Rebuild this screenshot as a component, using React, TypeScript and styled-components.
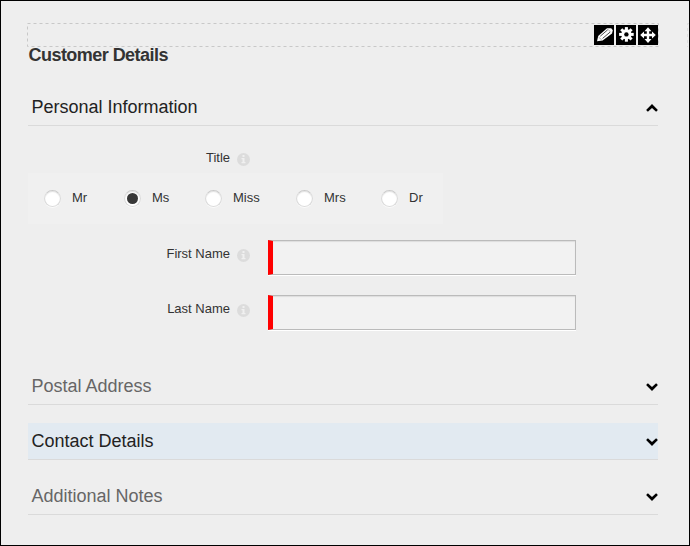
import React from "react";
import styled, { createGlobalStyle } from "styled-components";

const GlobalStyle = createGlobalStyle`
  * { box-sizing: border-box; }
  body { margin: 0; background: #eeeeee; }
`;

const Page = styled.main`
  width: 690px;
  height: 546px;
  padding: 22px 0 0 26px;
  border: 1px solid #000;
  background: #eeeeee;
  color: #333;
  font-family: "Liberation Sans", Arial, sans-serif;
  font-size: 13px;
  overflow: hidden;
`;

const TopRow = styled.div`
  display: flex;
  justify-content: space-between;
  height: 24px;
`;

const Toolbar = styled.div`
  position: relative;
  width: 632px;
  padding: 2px 1px 0 0;
  display: flex;
  justify-content: flex-end;
  gap: 2px;
`;

const DashedOutline = styled.svg`
  position: absolute;
  inset: 0;
  pointer-events: none;
`;

const NextRegion = styled.svg`
  display: block;
  width: 2px;
  height: 24px;
`;

const ToolButton = styled.button`
  position: relative;
  width: 20px;
  height: 20px;
  padding: 0;
  border: 0;
  background: #000;
  color: #fff;
  svg { display: block; }
`;

const Content = styled.div`
  width: 630px;
  margin-left: 1px;
`;

const Heading = styled.h1`
  margin: 0;
  height: 42px;
  padding-left: 0.5px;
  font-size: 18px;
  line-height: 16px;
  font-weight: bold;
  letter-spacing: -0.54px;
  color: #333;
`;

const SectionHeader = styled.div<{ $tone?: "open" | "hover" }>`
  display: flex;
  justify-content: space-between;
  height: 37px;
  margin-bottom: 18px;
  padding-left: 3.5px;
  border-bottom: 1px solid #dadada;
  background: ${(p) => (p.$tone === "hover" ? "#e2eaf1" : "transparent")};
  color: ${(p) => (p.$tone ? "#222" : "#666")};
  font-size: 18px;
  line-height: 37px;
`;

const Chevron = styled.svg<{ $up?: boolean }>`
  width: 14px;
  height: 10px;
  margin-top: 14px;
  transform: ${(p) => (p.$up ? "scaleY(-1)" : "none")};
`;

const Fields = styled.div`
  height: 224px;
`;

const FieldRow = styled.div<{ $height: number }>`
  display: flex;
  height: ${(p) => p.$height}px;
`;

const Label = styled.label`
  width: 202px;
  text-align: right;
  line-height: 28px;
`;

const Info = styled.svg`
  width: 13px;
  height: 13px;
  margin: 9px 18px 0 7px;
`;

const Options = styled.div`
  display: grid;
  grid-template-columns: 80px 81px 91px 85px 46px;
  width: 415px;
  height: 51px;
  margin-bottom: 16px;
  padding: 16px 0 0 16px;
  background: #f0f0f0;
`;

const Option = styled.label`
  display: flex;
  gap: 11px;
  line-height: 17px;
  white-space: nowrap;
`;

const Radio = styled.span<{ $checked?: boolean }>`
  display: grid;
  place-items: center;
  flex: none;
  width: 17px;
  height: 17px;
  margin-top: 1px;
  border: 1px solid #dadada;
  border-top-color: #cacaca;
  border-radius: 50%;
  background: #fff;
  box-shadow: inset 0 1px 1px #e3e3e3, 0 1px 0 #fafafa;
  &::after {
    content: "";
    width: 11px;
    height: 11px;
    border-radius: 50%;
    background: ${(p) => (p.$checked ? "#383838" : "transparent")};
  }
`;

const TextInput = styled.input`
  width: 308px;
  height: 35px;
  padding: 0 8px;
  border: 1px solid #bbb;
  border-left: 5px solid #f00;
  border-radius: 0;
  outline: 0;
  background: #f2f2f2;
  box-shadow: inset 0 1px 1px #ddd, 0 1px 0 #fff;
`;

const InfoIcon = () => (
  <Info viewBox="0 0 13 13">
    <circle cx="6.5" cy="6.5" r="6.5" fill="#dcdcdc" />
    <path d="M5.5 2h2v2h-2zM4.5 5h3v4h1v1.2h-4V9h1V6.2h-1z" fill="#f0f0f0" />
  </Info>
);

const Arrow = ({ up }: { up?: boolean }) => (
  <Chevron $up={up} viewBox="0 0 14 10">
    <path d="M2.1 3.1 3.9 1.3 8 5.1 12.1 1.3 13.9 3.1 8 9z" fill="#000" />
  </Chevron>
);

const PencilIcon = () => (
  <svg width="20" height="20" viewBox="0 0 20 20">
    <path d="M3 16.2 4.2 11 13 3.2h4.2l1.6 2-.8 3.2-9.4 7z" fill="#fff" />
    <path d="m6.3 11.2 7.4-6.4M8.6 13.4l7.4-6.2" fill="none" stroke="#000" strokeWidth=".7" />
    <path d="m4.6 12.2 3.1 2.6M14.2 4.4l2.6 3" stroke="#777" strokeWidth=".6" />
  </svg>
);

const GearIcon = () => (
  <svg width="20" height="20" viewBox="0 0 20 20">
    <g fill="#fff" transform="translate(10.4 9.4)">
      {[0, 45, 90, 135].map((a) => (
        <rect key={a} x="-1.5" y="-7.3" width="3" height="14.6" transform={`rotate(${a})`} />
      ))}
      <circle r="5.1" />
      <circle r="2.2" fill="#000" />
    </g>
  </svg>
);

const MoveIcon = () => (
  <svg width="20" height="20" viewBox="0 0 20 20">
    <path d="m10 2.3 3.5 4h-2.3v2.5h2.8V6.5l3.8 3.5-3.8 3.5v-2.3h-2.8v2.9h2.3L10 18l-3.5-3.9h2.3v-2.9H6v2.3L2.2 10 6 6.5v2.3h2.8V6.3H6.5z" fill="#fff" />
  </svg>
);

const titles = ["Mr", "Ms", "Miss", "Mrs", "Dr"];

export default function App() {
  return (
    <>
      <GlobalStyle />
      <Page>
        <TopRow>
          <Toolbar>
            <DashedOutline width="632" height="24">
              <rect x=".5" y=".5" width="631" height="23" fill="none" stroke="#c8c8c8" strokeDasharray="3 3" />
            </DashedOutline>
            <ToolButton aria-label="Edit"><PencilIcon /></ToolButton>
            <ToolButton aria-label="Settings"><GearIcon /></ToolButton>
            <ToolButton aria-label="Move"><MoveIcon /></ToolButton>
          </Toolbar>
          <NextRegion>
            <path d="M2 .5H.5V24" fill="none" stroke="#dedede" strokeDasharray="3 3" />
          </NextRegion>
        </TopRow>
        <Content>
          <Heading>Customer Details</Heading>
          <SectionHeader $tone="open">Personal Information<Arrow up /></SectionHeader>
          <Fields>
            <FieldRow $height={29}>
              <Label>Title</Label>
              <InfoIcon />
            </FieldRow>
            <Options>
              {titles.map((t) => (
                <Option key={t}><Radio $checked={t === "Ms"} />{t}</Option>
              ))}
            </Options>
            {["First Name", "Last Name"].map((name) => (
              <FieldRow key={name} $height={55}>
                <Label>{name}</Label>
                <InfoIcon />
                <TextInput aria-label={name} />
              </FieldRow>
            ))}
          </Fields>
          <SectionHeader>Postal Address<Arrow /></SectionHeader>
          <SectionHeader $tone="hover">Contact Details<Arrow /></SectionHeader>
          <SectionHeader>Additional Notes<Arrow /></SectionHeader>
        </Content>
      </Page>
    </>
  );
}
